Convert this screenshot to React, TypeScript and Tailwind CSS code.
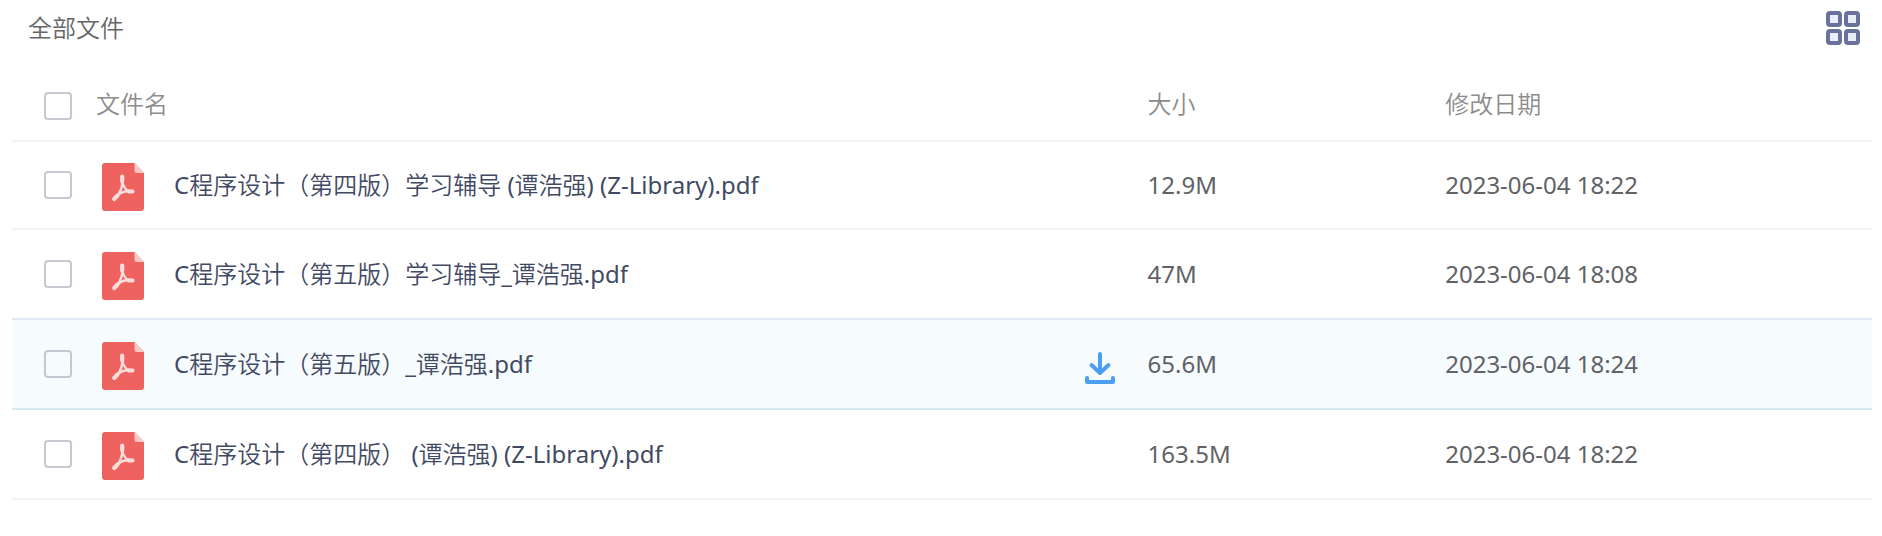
import clsx from 'clsx';
import { useState } from 'react';

type FileItem = {
  name: string;
  size: string;
  date: string;
};

const files: FileItem[] = [
  {
    name: 'C程序设计（第四版）学习辅导 (谭浩强) (Z-Library).pdf',
    size: '12.9M',
    date: '2023-06-04 18:22',
  },
  {
    name: 'C程序设计（第五版）学习辅导_谭浩强.pdf',
    size: '47M',
    date: '2023-06-04 18:08',
  },
  {
    name: 'C程序设计（第五版）_谭浩强.pdf',
    size: '65.6M',
    date: '2023-06-04 18:24',
  },
  {
    name: 'C程序设计（第四版） (谭浩强) (Z-Library).pdf',
    size: '163.5M',
    date: '2023-06-04 18:22',
  },
];

function GridIcon() {
  return (
    <svg
      viewBox="0 0 34 34"
      className="size-[34px]"
      fill="#e9eefb"
      stroke="#69729d"
      strokeWidth="4"
    >
      <rect x="2" y="2" width="12" height="12" rx="2" />
      <rect x="20" y="2" width="12" height="12" rx="2" />
      <rect x="2" y="20" width="12" height="12" rx="2" />
      <rect x="20" y="20" width="12" height="12" rx="2" />
    </svg>
  );
}

function PdfIcon() {
  return (
    <svg viewBox="0 0 42 48" className="h-12 w-[42px] shrink-0">
      <path
        d="M3 0h29.500L42 10v35a3 3 0 0 1-3 3H3a3 3 0 0 1-3-3V3a3 3 0 0 1 3-3z"
        fill="#ee625f"
      />
      <path d="M32.500 0 42 10h-7a2.500 2.500 0 0 1-2.500-2.500z" fill="#f9c9c8" />
      <g
        fill="none"
        stroke="#fbdcdc"
        strokeLinecap="round"
        strokeLinejoin="round"
      >
        <path
          d="M20.200 13.500v5M15.500 32.500l-3.300 3.500M26.500 28.300l4 .2"
          strokeWidth="4.200"
        />
        <path
          d="M20.300 18c.4 4.500 2.400 7.800 6.200 10.200-4.400-.2-7.800 1.200-11 4.300 3.400-4.300 5-8.800 4.800-14.500z"
          strokeWidth="2.400"
        />
      </g>
    </svg>
  );
}

function DownloadIcon() {
  return (
    <svg
      viewBox="0 0 30 32"
      className="h-8 w-[30px]"
      fill="none"
      stroke="#4a9ff0"
      strokeWidth="4"
      strokeLinecap="round"
      strokeLinejoin="round"
    >
      <path d="M15 2v18M6.500 13l8.500 8 8.500-8" />
      <path d="M2 26v4h26v-4" />
    </svg>
  );
}

function Checkbox({
  label,
  checked,
  onChange,
}: {
  label: string;
  checked: boolean;
  onChange: () => void;
}) {
  return (
    <input
      type="checkbox"
      aria-label={label}
      checked={checked}
      onChange={onChange}
      className="block size-7 appearance-none rounded border-2 border-[#c6c8d1] checked:border-[#4a9ff0] checked:bg-[#4a9ff0]"
    />
  );
}

export default function App() {
  const [selected, setSelected] = useState<string[]>([]);
  const [active, setActive] = useState(2);

  const toggle = (name: string) =>
    setSelected((prev) =>
      prev.includes(name) ? prev.filter((n) => n !== name) : [...prev, name],
    );

  const allSelected = selected.length === files.length;

  return (
    <main className="min-h-screen bg-white pr-2.5 pl-3 font-['Noto_Sans','Noto_Sans_CJK_SC_DemiLight','Noto_Sans_CJK_SC',sans-serif] text-2xl text-[#606266]">
      <header className="flex h-14 items-center justify-between pr-3 pl-4">
        <h1 className="font-[350] text-[#666]">全部文件</h1>
        <button type="button" aria-label="切换视图">
          <GridIcon />
        </button>
      </header>

      <table className="mt-3 w-full table-fixed border-separate border-spacing-0 text-left whitespace-nowrap">
        <thead>
          <tr className="h-[74px] text-[#8c8c8c] *:border-b-2 *:border-[#f3f3f4] *:font-[350]">
            <th className="w-[84px]">
              <div className="pt-1 pl-8">
                <Checkbox
                  label="全选"
                  checked={allSelected}
                  onChange={() =>
                    setSelected(allSelected ? [] : files.map((f) => f.name))
                  }
                />
              </div>
            </th>
            <th>文件名</th>
            <th className="w-[16%] pl-px">大小</th>
            <th className="w-[23%] pl-px">修改日期</th>
          </tr>
        </thead>
        <tbody>
          {files.map((file, i) => (
            <tr
              key={file.name}
              onMouseEnter={() => setActive(i)}
              className={clsx(
                'h-[90px] *:border-b-2 first:h-[88px]',
                i === active && 'bg-[#f6fbfe] *:border-[#d5e9f1]',
                i === active - 1 && '*:border-[#e2e8f6]',
                i !== active && i !== active - 1 && '*:border-[#f3f3f4]',
              )}
            >
              <td>
                <div className="pl-8">
                  <Checkbox
                    label={file.name}
                    checked={selected.includes(file.name)}
                    onChange={() => toggle(file.name)}
                  />
                </div>
              </td>
              <td>
                <div className="flex items-center pt-1 pr-8 pl-1.5">
                  <PdfIcon />
                  <span className="ml-[30px] flex-1 truncate pb-1 text-[#424a63]">
                    {file.name}
                  </span>
                  {i === active && (
                    <button type="button" aria-label="下载" className="pt-1">
                      <DownloadIcon />
                    </button>
                  )}
                </div>
              </td>
              <td className="pl-px">{file.size}</td>
              <td className="pl-px">{file.date}</td>
            </tr>
          ))}
        </tbody>
      </table>
    </main>
  );
}
